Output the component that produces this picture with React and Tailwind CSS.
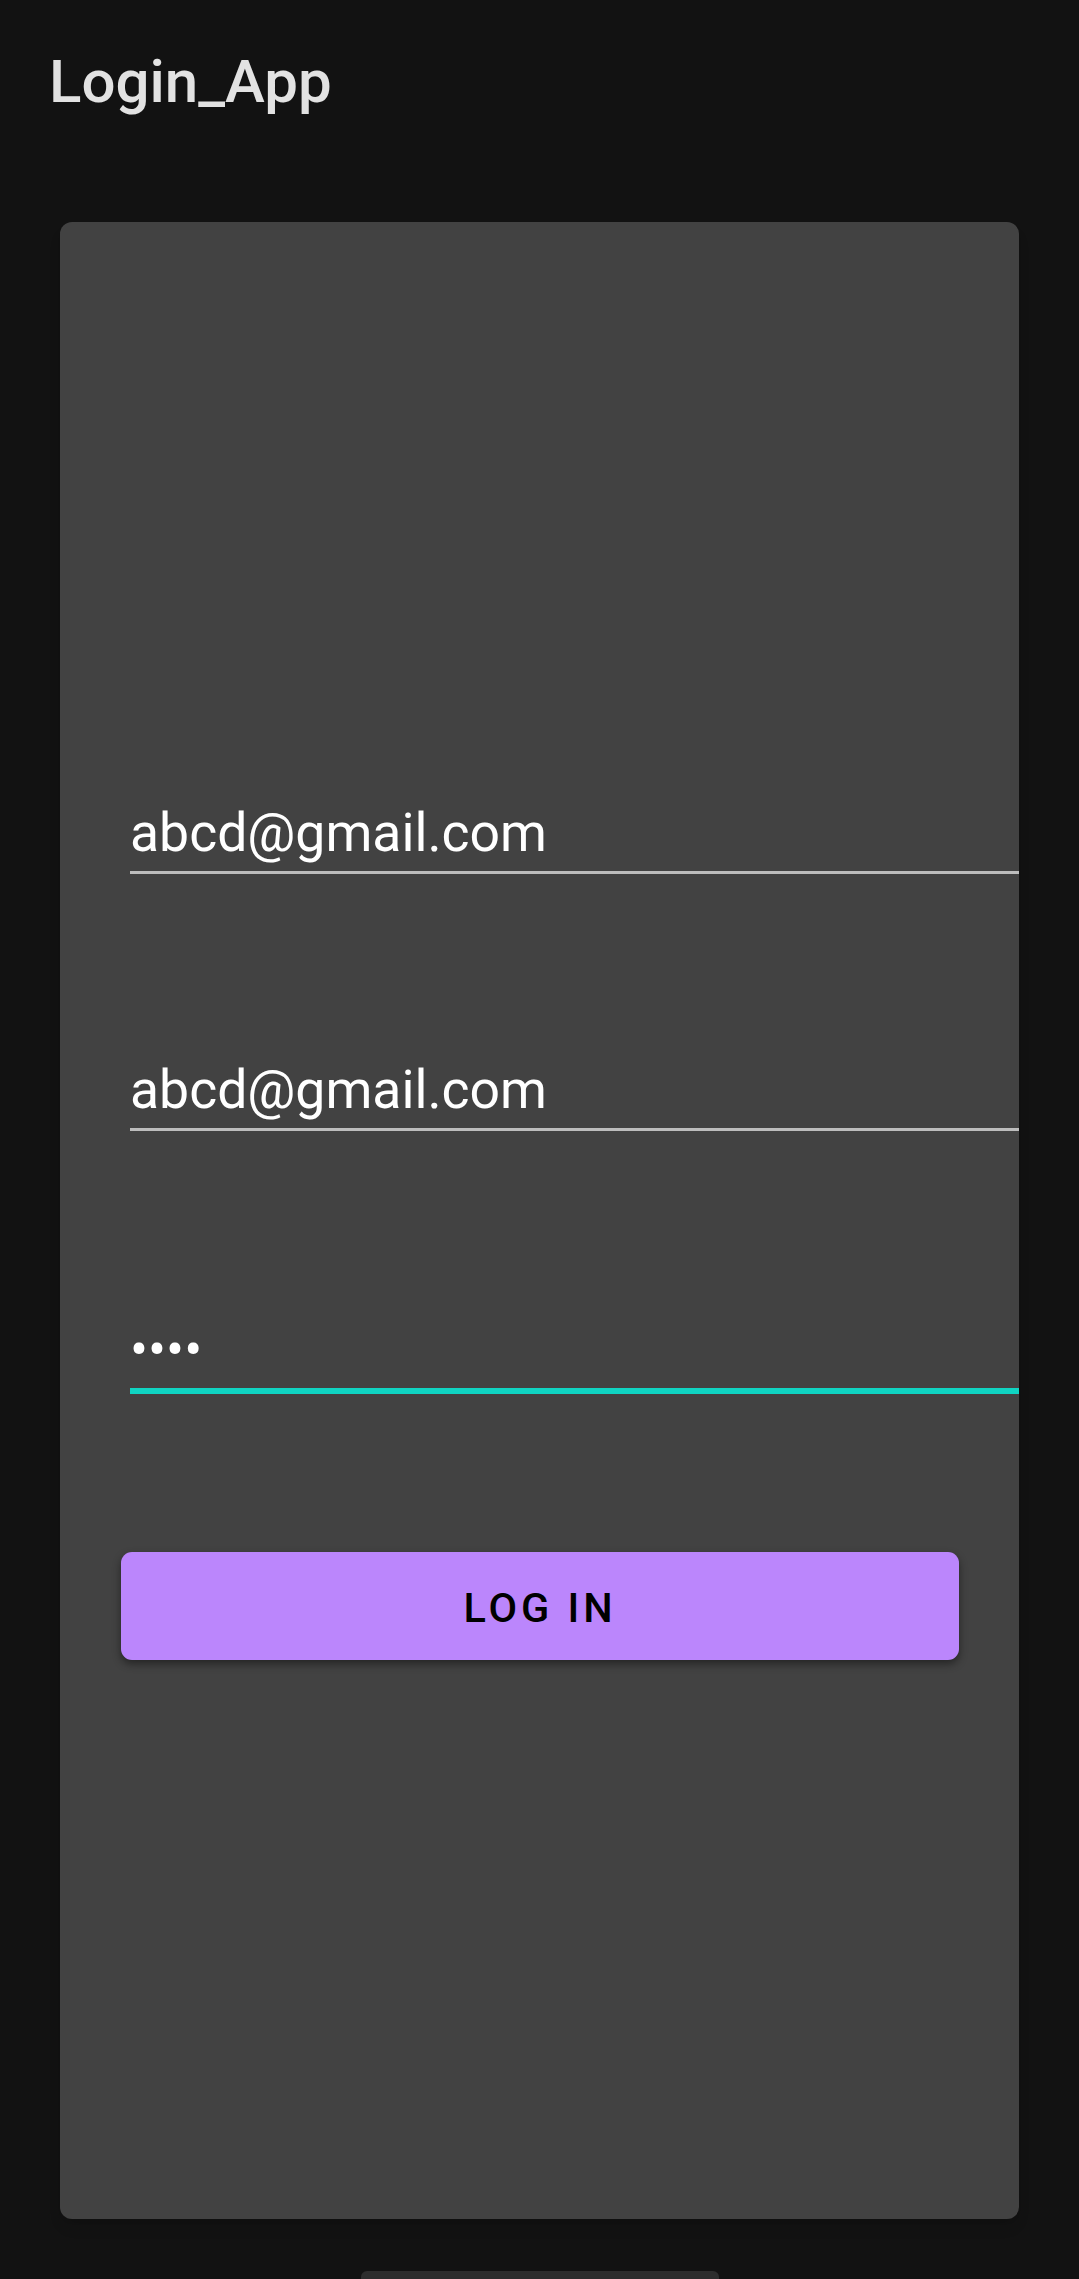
import React, { useState } from 'react';

const font = { fontFamily: 'Roboto, "Noto Sans", sans-serif' };

const Field = ({ value, className = '' }) => (
  <div className={`pl-[70px] ${className}`}>
    <div className="text-[53.5px] leading-[60px] text-white whitespace-nowrap">{value}</div>
    <div className="mt-[8px] h-[3px] bg-[#bdbdbd]" />
  </div>
);

const App = () => {
  const [email] = useState('abcd@gmail.com');
  const [password] = useState('abcd');

  return (
    <div className="h-[2279px] w-[1079px] overflow-hidden bg-[#121212] flex flex-col" style={font}>
      <div className="pt-[46px] pl-[49px]">
        <h1 className="text-[60px] leading-[72px] font-medium text-[#e2e2e2]">Login_App</h1>
      </div>

      <div className="mx-[60px] mt-[104px] h-[1997px] shrink-0 rounded-[12px] bg-[#424242] shadow-lg overflow-hidden">
        <Field value={email} className="pt-[581px]" />
        <Field value={email} className="pt-[186px]" />

        <div className="pl-[70px] pt-[189px]">
          <div className="text-[53.5px] leading-[60px] text-white whitespace-nowrap">
            {'•'.repeat(password.length)}
          </div>
          <div className="mt-[8px] h-[6px] bg-[#10d4c2]" />
        </div>

        <div className="pl-[61px] pr-[60px] pt-[158px]">
          <button className="w-full h-[108px] pt-[4px] rounded-[11px] bg-[#bb86fc] shadow-[0_4px_8px_rgba(0,0,0,0.45)] text-black text-[41.5px] font-medium tracking-[0.095em] uppercase">
            Log in
          </button>
        </div>
      </div>

      <div className="flex justify-center pt-[52px]">
        <div className="w-[358px] h-[10px] rounded-t-[6px] bg-[#2d2d2d]" />
      </div>
    </div>
  );
};

export default App;
